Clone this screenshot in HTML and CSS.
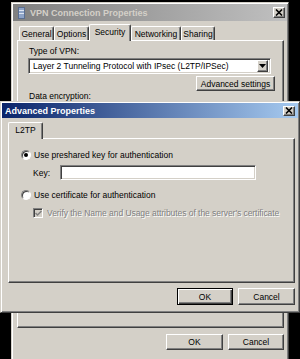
FILE: index.html
```html
<!DOCTYPE html>
<html lang="en">
<head>
    <meta charset="UTF-8">
    <title>VPN Connection Properties</title>
    <link rel="stylesheet" href="styles.css">
</head>
<body>
    <div class="desktop">
        <!-- back window -->
        <div class="window window-back">
            <div class="titlebar inactive">
                <svg class="app-icon" width="7" height="12" viewBox="0 0 7 12">
                    <rect x="0.5" y="0.5" width="6" height="11" fill="#8ea4c8" stroke="#5a6e90"/>
                    <line x1="1" y1="3.5" x2="6" y2="3.5" stroke="#dfe6f2"/>
                    <line x1="1" y1="6.5" x2="6" y2="6.5" stroke="#dfe6f2"/>
                </svg>
                <span class="title">VPN Connection Properties</span>
                <span class="close">
                    <svg width="8" height="7" viewBox="0 0 8 7"><path d="M1 0.5 L7 6.5 M7 0.5 L1 6.5" stroke="#000" stroke-width="1.6"/></svg>
                </span>
            </div>
            <div class="body body-back">
                <div class="tabs">
                    <div class="tab w-general">General</div>
                    <div class="tab w-options">Options</div>
                    <div class="tab active w-security">Security</div>
                    <div class="tab w-networking">Networking</div>
                    <div class="tab w-sharing">Sharing</div>
                </div>
                <div class="panel panel-back">
                    <div class="label">Type of VPN:</div>
                    <div class="combo">
                        <span class="combo-text">Layer 2 Tunneling Protocol with IPsec (L2TP/IPSec)</span>
                        <span class="combo-btn">
                            <svg width="7" height="4" viewBox="0 0 7 4"><path d="M0 0 H7 L3.5 4 Z" fill="#000"/></svg>
                        </span>
                    </div>
                    <div class="right">
                        <button class="btn btn-adv">Advanced settings</button>
                    </div>
                    <div class="label label-enc">Data encryption:</div>
                </div>
                <div class="buttons buttons-back">
                    <button class="btn btn-ok-back">OK</button>
                    <button class="btn btn-cancel-back">Cancel</button>
                </div>
            </div>
        </div>

        <!-- front window -->
        <div class="window window-front">
            <div class="titlebar active-title">
                <span class="title">Advanced Properties</span>
                <span class="close close-front">
                    <svg width="8" height="7" viewBox="0 0 8 7"><path d="M1 0.5 L7 6.5 M7 0.5 L1 6.5" stroke="#000" stroke-width="1.6"/></svg>
                </span>
            </div>
            <div class="body body-front">
                <div class="tabs">
                    <div class="tab active w-l2tp">L2TP</div>
                </div>
                <div class="panel panel-front">
                    <div class="option">
                        <span class="radio checked"></span>
                        <span>Use preshared key for authentication</span>
                    </div>
                    <div class="key-row">
                        <span>Key:</span>
                        <span class="textbox"></span>
                    </div>
                    <div class="option option-cert">
                        <span class="radio"></span>
                        <span>Use certificate for authentication</span>
                    </div>
                    <div class="check-row">
                        <span class="checkbox">
                            <svg width="7" height="7" viewBox="0 0 7 7"><path d="M0.5 3 L2.5 5 L6.5 1" stroke="#808080" stroke-width="1.5" fill="none"/></svg>
                        </span>
                        <span class="disabled">Verify the Name and Usage attributes of the server's certificate</span>
                    </div>
                </div>
                <div class="buttons buttons-front">
                    <button class="btn btn-default btn-ok-front">OK</button>
                    <button class="btn btn-cancel-front">Cancel</button>
                </div>
            </div>
        </div>
    </div>
</body>
</html>
```

FILE: styles.css
```css
body {
    margin: 0;
    padding: 0;
    background-color: #000;
    font-family: "Liberation Sans", Arial, sans-serif;
    font-size: 8.5px;
    color: #000;
}

.desktop {
    position: relative;
    width: 300px;
    height: 359px;
    background-color: #000;
    overflow: hidden;
}

/* windows sit on the desktop at their own spots */
.window {
    position: absolute;
    box-sizing: border-box;
    background-color: #d4d0c8;
    border: 1px solid;
    border-color: #d4d0c8 #404040 #404040 #d4d0c8;
    box-shadow: inset 1px 1px #fff, inset -1px -1px #808080;
    padding: 1px;
}

.window-back {
    left: 11px;
    top: 2px;
    width: 278px;
    height: 380px;
}

.window-front {
    left: 0;
    top: 101px;
    width: 300px;
    height: 212px;
}

.titlebar {
    display: flex;
    align-items: center;
    padding: 0 2px 0 3px;
    font-weight: bold;
    font-size: 9px;
}

.titlebar.inactive {
    height: 17px;
    background: linear-gradient(to right, #808080, #c0c0c0);
    color: #d4d0c8;
}

.titlebar.active-title {
    height: 15px;
    background: linear-gradient(to right, #0a246a, #a6caf0);
    color: #fff;
}

.app-icon {
    margin: 0 5px 0 2px;
}

.title {
    flex: 1;
    white-space: nowrap;
}

.close {
    display: flex;
    align-items: center;
    justify-content: center;
    box-sizing: border-box;
    width: 12px;
    height: 11px;
    background-color: #d4d0c8;
    border: 1px solid;
    border-color: #fff #404040 #404040 #fff;
    box-shadow: inset -1px -1px #808080;
}

.close-front {
    height: 10px;
    margin-right: 1px;
}

.body-back {
    padding: 0 3px 0 4px;
}

.body-front {
    padding: 0 3px 0 6px;
}

.tabs {
    display: flex;
    align-items: flex-end;
    padding-left: 2px;
}

.body-back .tabs {
    margin-top: 3px;
    height: 16px;
    padding-left: 2px;
}

.body-front .tabs {
    margin-top: 5px;
    height: 15px;
    padding-left: 0;
}

.tab {
    box-sizing: border-box;
    height: 14px;
    display: flex;
    align-items: center;
    justify-content: center;
    border-top: 1px solid #fff;
    border-left: 1px solid #fff;
    border-right: 1px solid #404040;
    box-shadow: inset -1px 0 #808080;
    border-radius: 2px 2px 0 0;
    white-space: nowrap;
}

.tab.active {
    position: relative;
    z-index: 1;
    height: 17px;
    margin-bottom: -1px;
    padding-bottom: 2px;
    background-color: #d4d0c8;
}

.w-general { width: 35px; }
.w-options { width: 35px; }
.w-security { width: 42px; }
.w-networking { width: 50px; }
.w-sharing { width: 34px; }
.w-l2tp { width: 35px; height: 16px; }

.panel {
    box-sizing: border-box;
    border: 1px solid;
    border-color: #fff #404040 #404040 #fff;
    box-shadow: inset -1px -1px #808080;
}

.panel-back {
    height: 288px;
    padding: 5px 8px 0 11px;
}

.panel-front {
    height: 145px;
    padding: 11px 8px 0 12px;
}

.label {
    height: 11px;
    line-height: 11px;
}

.combo {
    display: flex;
    align-items: center;
    box-sizing: border-box;
    height: 16px;
    width: 243px;
    margin: 1px 0 0 -1px;
    background-color: #fff;
    border: 1px solid;
    border-color: #808080 #fff #fff #808080;
    box-shadow: inset 1px 1px #404040, inset -1px -1px #d4d0c8;
    padding: 2px;
}

.combo-text {
    flex: 1;
    padding-left: 2px;
    white-space: nowrap;
    overflow: hidden;
}

.combo-btn {
    display: flex;
    align-items: center;
    justify-content: center;
    box-sizing: border-box;
    width: 11px;
    height: 12px;
    background-color: #d4d0c8;
    border: 1px solid;
    border-color: #fff #404040 #404040 #fff;
    box-shadow: inset -1px -1px #808080;
}

.right {
    display: flex;
    justify-content: flex-end;
    margin-top: 2px;
}

.btn {
    box-sizing: border-box;
    font-family: "Liberation Sans", Arial, sans-serif;
    font-size: 8.5px;
    color: #000;
    background-color: #d4d0c8;
    border: 1px solid;
    border-color: #fff #404040 #404040 #fff;
    box-shadow: inset -1px -1px #808080;
    padding: 0;
    margin: 0;
}

.btn-adv {
    width: 79px;
    height: 15px;
}

.label-enc {
    margin-top: 0;
}

.buttons {
    display: flex;
    justify-content: flex-end;
    gap: 5px;
}

.buttons-back {
    margin-top: 6px;
}

.btn-ok-back { width: 57px; height: 16px; }
.btn-cancel-back { width: 56px; height: 16px; }

.buttons-front {
    margin-top: 5px;
}

.btn-ok-front { width: 56px; height: 17px; }
.btn-cancel-front { width: 57px; height: 17px; }

.btn-default {
    border: 1px solid #000;
    box-shadow: inset 1px 1px #fff, inset -1px -1px #404040, inset -2px -2px #808080;
}

.option {
    display: flex;
    align-items: center;
    gap: 3px;
    height: 10px;
}

.option-cert {
    margin-top: 10px;
}

.radio {
    position: relative;
    box-sizing: border-box;
    width: 10px;
    height: 10px;
    border-radius: 50%;
    background-color: #fff;
    border: 1px solid;
    border-color: #808080 #fff #fff #808080;
    box-shadow: inset 1px 1px #404040;
}

.radio.checked::after {
    content: "";
    position: absolute;
    left: 2px;
    top: 2px;
    width: 4px;
    height: 4px;
    border-radius: 50%;
    background-color: #000;
}

.key-row {
    display: flex;
    align-items: center;
    height: 15px;
    margin: 5px 0 0 12px;
}

.key-row span:first-child {
    width: 27px;
}

.textbox {
    box-sizing: border-box;
    width: 196px;
    height: 15px;
    background-color: #fff;
    border: 1px solid;
    border-color: #808080 #fff #fff #808080;
    box-shadow: inset 1px 1px #404040, inset -1px -1px #d4d0c8;
}

.check-row {
    display: flex;
    align-items: center;
    gap: 4px;
    margin: 8px 0 0 12px;
    height: 10px;
}

.checkbox {
    display: flex;
    align-items: center;
    justify-content: center;
    box-sizing: border-box;
    width: 10px;
    height: 10px;
    background-color: #d4d0c8;
    border: 1px solid;
    border-color: #808080 #fff #fff #808080;
    box-shadow: inset 1px 1px #404040;
}

.disabled {
    color: #808080;
    text-shadow: 1px 1px #fff;
    white-space: nowrap;
    letter-spacing: -0.05px;
}
```
